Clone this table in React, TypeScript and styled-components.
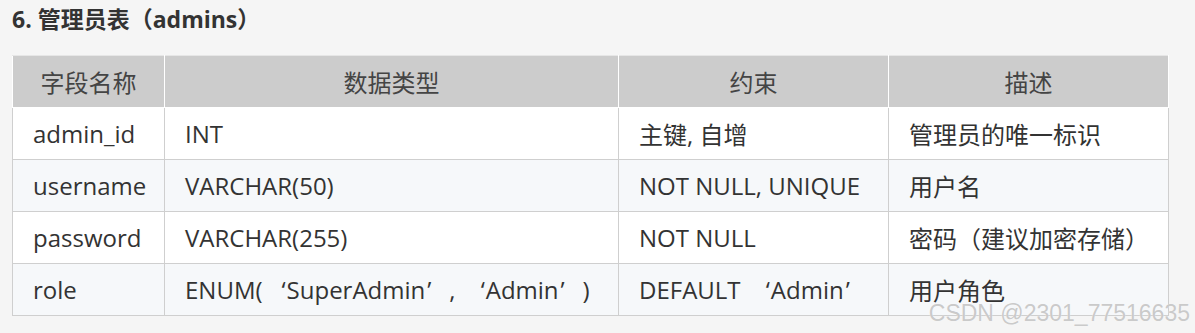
import React from "react";
import styled, { createGlobalStyle } from "styled-components";

const GlobalStyle = createGlobalStyle`
  html, body {
    margin: 0;
    padding: 0;
    background: #f5f5f5;
  }
  body {
    font-family: "Open Sans", "Noto Sans CJK SC", sans-serif;
    color: #333;
  }
`;

// Fundo da página com a margem do artigo
const Page = styled.div`
  position: relative;
  width: 1195px;
  height: 333px;
  padding: 5px 0 0 12px;
  box-sizing: border-box;
  overflow: hidden;
`;

// Título da seção
const Heading = styled.h3`
  margin: 0 0 22px 0;
  font-size: 23px;
  font-weight: 700;
  line-height: 28px;
  color: #333;
`;

const Table = styled.table`
  border-collapse: collapse;
  table-layout: fixed;
  width: 1153px;
  font-size: 24px;
`;

const HeadCell = styled.th<{ $w: number }>`
  width: ${(p) => p.$w}px;
  height: 51px;
  padding: 0;
  background: #cccccc;
  border: 1px solid #fff;
  border-top-color: #e6e6e6;
  font-weight: 400;
  color: #444;
  text-align: center;
`;

const Row = styled.tr<{ $alt: boolean }>`
  background: ${(p) => (p.$alt ? "#f6f8fa" : "#ffffff")};
`;

const Cell = styled.td`
  height: 51px;
  padding: 0 0 0 20px;
  border: 1px solid #cfcfcf;
  color: #333;
  white-space: nowrap;
`;

// Aspas de largura total (fonte chinesa no original)
const Quote = styled.span<{ $open?: boolean }>`
  display: inline-block;
  width: 1em;
  text-align: ${(p) => (p.$open ? "right" : "left")};
  padding: ${(p) => (p.$open ? "0 1px 0 0" : "0 0 0 2px")};
  box-sizing: border-box;
`;

// Marca d'água do CSDN
const Watermark = styled.div`
  position: absolute;
  right: 5px;
  bottom: 7px;
  font-family: "Liberation Sans", "DejaVu Sans", sans-serif;
  font-size: 23px;
  line-height: 26px;
  color: rgba(195, 195, 195, 0.9);
  text-shadow: 0 0 1px rgba(255, 255, 255, 0.9);
`;

const columns = [
  { title: "字段名称", width: 151 },
  { title: "数据类型", width: 453 },
  { title: "约束", width: 269 },
  { title: "描述", width: 279 },
];

const Q = ({ children }: { children: string }) => (
  <>
    <Quote $open>‘</Quote>
    {children}
    <Quote>’</Quote>
  </>
);

const rows: React.ReactNode[][] = [
  ["admin_id", "INT", "主键, 自增", "管理员的唯一标识"],
  ["username", "VARCHAR(50)", "NOT NULL, UNIQUE", "用户名"],
  ["password", "VARCHAR(255)", "NOT NULL", "密码（建议加密存储）"],
  [
    "role",
    <>
      ENUM(<Q>SuperAdmin</Q>, <Q>Admin</Q>)
    </>,
    <>
      DEFAULT <Q>Admin</Q>
    </>,
    "用户角色",
  ],
];

export default function App() {
  return (
    <>
      <GlobalStyle />
      <Page>
        <Heading>6. 管理员表（admins）</Heading>
        <Table>
          <thead>
            <tr>
              {columns.map((c) => (
                <HeadCell key={c.title} $w={c.width}>
                  {c.title}
                </HeadCell>
              ))}
            </tr>
          </thead>
          <tbody>
            {rows.map((r, i) => (
              <Row key={i} $alt={i % 2 === 1}>
                {r.map((v, j) => (
                  <Cell key={j}>{v}</Cell>
                ))}
              </Row>
            ))}
          </tbody>
        </Table>
        <Watermark>CSDN @2301_77516635</Watermark>
      </Page>
    </>
  );
}
